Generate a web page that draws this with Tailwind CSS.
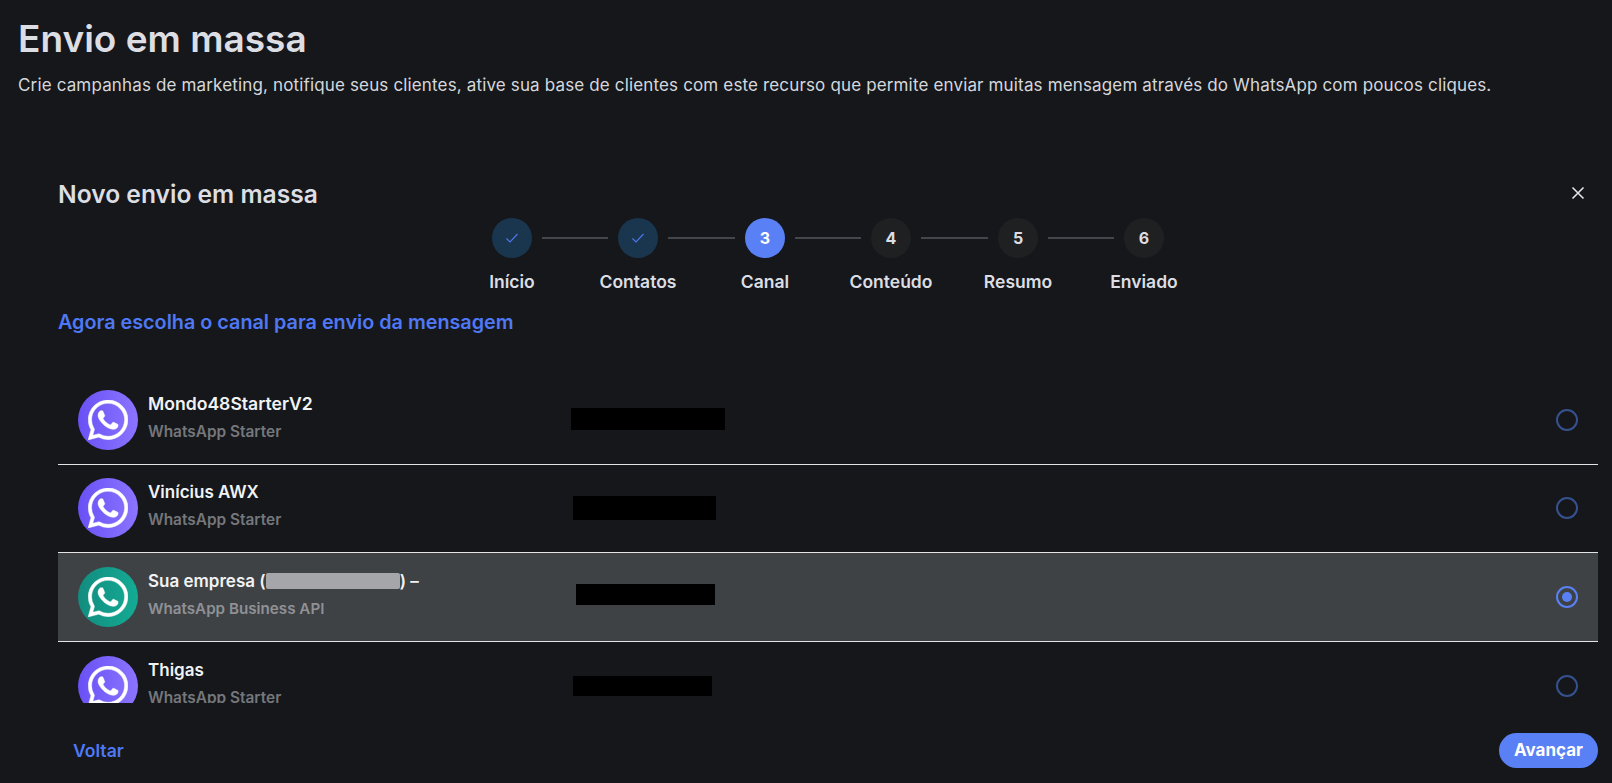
<!DOCTYPE html>
<html lang="pt-BR">
<head>
    <meta charset="UTF-8">
    <title>Envio em massa</title>
    <script src="https://cdn.jsdelivr.net/npm/@tailwindcss/browser@4"></script>
</head>
<body class="bg-[#15171b] h-[783px] overflow-hidden font-['Inter','Liberation_Sans',sans-serif] text-[#dcdee3]">
    <svg class="hidden">
        <symbol id="wa" viewBox="0 0 24 24">
            <path fill="currentColor" stroke="currentColor" stroke-width="0.25" d="M17.472 14.382c-.297-.149-1.758-.867-2.03-.967-.273-.099-.471-.148-.67.15-.197.297-.767.966-.94 1.164-.173.199-.347.223-.644.075-.297-.15-1.255-.463-2.39-1.475-.883-.788-1.48-1.761-1.653-2.059-.173-.297-.018-.458.13-.606.134-.133.298-.347.446-.52.149-.174.198-.298.298-.497.099-.198.05-.371-.025-.52-.075-.149-.669-1.612-.916-2.207-.242-.579-.487-.5-.669-.51-.173-.008-.371-.01-.57-.01-.198 0-.52.074-.792.372-.272.297-1.04 1.016-1.04 2.479 0 1.462 1.065 2.875 1.213 3.074.149.198 2.096 3.2 5.077 4.487.709.306 1.262.489 1.694.625.712.227 1.36.195 1.871.118.571-.085 1.758-.719 2.006-1.413.248-.694.248-1.289.173-1.413-.074-.124-.272-.198-.57-.347m-5.421 7.403h-.004a9.87 9.87 0 01-5.031-1.378l-.361-.214-3.741.982.998-3.648-.235-.374a9.86 9.86 0 01-1.51-5.26c.001-5.45 4.436-9.884 9.888-9.884 2.64 0 5.122 1.03 6.988 2.898a9.825 9.825 0 012.893 6.994c-.003 5.45-4.437 9.884-9.885 9.884m8.413-18.297A11.815 11.815 0 0012.05 0C5.495 0 .16 5.335.157 11.892c0 2.096.547 4.142 1.588 5.945L.057 24l6.305-1.654a11.882 11.882 0 005.683 1.448h.005c6.554 0 11.89-5.335 11.893-11.893a11.821 11.821 0 00-3.48-8.413z"/>
        </symbol>
    </svg>

    <header class="pl-[18px] pt-[17px]">
        <h1 class="text-[37px] leading-[44px] font-semibold">Envio em massa</h1>
        <p class="mt-[12px] text-[17px] tracking-[0.15px] leading-[24px] text-[#d5d7dc]">Crie campanhas de marketing, notifique seus clientes, ative sua base de clientes com este recurso que permite enviar muitas mensagem através do WhatsApp com poucos cliques.</p>
    </header>

    <main class="pl-[58px] pr-[14px] pt-[81px]">
        <div class="flex items-center justify-between h-[32px]">
            <h2 class="text-[24.6px] leading-[32px] font-semibold">Novo envio em massa</h2>
            <svg class="w-[14px] h-[14px] mr-[13px] mb-[2px]" viewBox="0 0 14 14" fill="none" stroke="#e1e3e8" stroke-width="1.6"><path d="M1.5 1.5l11 11M12.5 1.5l-11 11"/></svg>
        </div>

        <div class="flex justify-center items-start mt-[8px]">
            <div class="w-[100px] flex flex-col items-center gap-[12px]">
                <div class="w-[40px] h-[40px] rounded-full bg-[#1a364e] flex items-center justify-center">
                    <svg class="w-[16px] h-[16px]" viewBox="0 0 16 16" fill="none" stroke="#4f78ee" stroke-width="1.1"><path d="M2.5 8.5l3.5 3.5 7.5-8"/></svg>
                </div>
                <span class="text-[17.5px] leading-[24px] font-semibold">Início</span>
            </div>
            <div class="w-[66px] h-[2px] bg-[#44464b] mt-[19px] mx-[-20px]"></div>
            <div class="w-[100px] flex flex-col items-center gap-[12px]">
                <div class="w-[40px] h-[40px] rounded-full bg-[#1a364e] flex items-center justify-center">
                    <svg class="w-[16px] h-[16px]" viewBox="0 0 16 16" fill="none" stroke="#4f78ee" stroke-width="1.1"><path d="M2.5 8.5l3.5 3.5 7.5-8"/></svg>
                </div>
                <span class="text-[17.5px] leading-[24px] font-semibold">Contatos</span>
            </div>
            <div class="w-[67px] h-[2px] bg-[#44464b] mt-[19px] mx-[-20px]"></div>
            <div class="w-[100px] flex flex-col items-center gap-[12px]">
                <div class="w-[40px] h-[40px] rounded-full bg-[#5a80f5] flex items-center justify-center font-bold text-white">3</div>
                <span class="text-[17.5px] leading-[24px] font-semibold">Canal</span>
            </div>
            <div class="w-[66px] h-[2px] bg-[#44464b] mt-[19px] mx-[-20px]"></div>
            <div class="w-[100px] flex flex-col items-center gap-[12px]">
                <div class="w-[40px] h-[40px] rounded-full bg-[#1f2022] flex items-center justify-center font-bold">4</div>
                <span class="text-[17.5px] leading-[24px] font-semibold">Conteúdo</span>
            </div>
            <div class="w-[67px] h-[2px] bg-[#44464b] mt-[19px] mx-[-20px]"></div>
            <div class="w-[100px] flex flex-col items-center gap-[12px]">
                <div class="w-[40px] h-[40px] rounded-full bg-[#1f2022] flex items-center justify-center font-bold">5</div>
                <span class="text-[17.5px] leading-[24px] font-semibold">Resumo</span>
            </div>
            <div class="w-[66px] h-[2px] bg-[#44464b] mt-[19px] mx-[-20px]"></div>
            <div class="w-[100px] flex flex-col items-center gap-[12px]">
                <div class="w-[40px] h-[40px] rounded-full bg-[#1f2022] flex items-center justify-center font-bold">6</div>
                <span class="text-[17.5px] leading-[24px] font-semibold">Enviado</span>
            </div>
        </div>

        <h3 class="mt-[14px] text-[19.8px] leading-[28px] font-semibold text-[#4f78f5]">Agora escolha o canal para envio da mensagem</h3>

        <div class="mt-[40px] h-[327px] overflow-hidden">
            <div class="h-[88.5px] border-b border-[#e4e4e4] flex items-center pl-[20px] pr-[20px]">
                <div class="w-[60px] h-[60px] shrink-0 rounded-full bg-linear-to-r from-[#6950f5] to-[#8c74ff] text-white flex items-center justify-center">
                    <svg class="w-[40px] h-[40px]"><use href="#wa"/></svg>
                </div>
                <div class="ml-[10px] w-[423px] shrink-0 pb-[6px]">
                    <div class="text-[17.6px] leading-[24px] font-semibold text-[#f1f2f4]">Mondo48StarterV2</div>
                    <div class="mt-[6px] text-[15.4px] leading-[20px] font-semibold text-[#75777b]">WhatsApp Starter</div>
                </div>
                <div class="w-[154px] h-[22px] bg-black mb-[2px]"></div>
                <div class="ml-auto w-[22px] h-[22px] rounded-full border-2 border-[#36518f]"></div>
            </div>
            <div class="h-[88.5px] border-b border-[#e4e4e4] flex items-center pl-[20px] pr-[20px]">
                <div class="w-[60px] h-[60px] shrink-0 rounded-full bg-linear-to-r from-[#6950f5] to-[#8c74ff] text-white flex items-center justify-center">
                    <svg class="w-[40px] h-[40px]"><use href="#wa"/></svg>
                </div>
                <div class="ml-[10px] w-[425px] shrink-0 pb-[6px]">
                    <div class="text-[17px] leading-[24px] font-semibold text-[#f1f2f4]">Vinícius AWX</div>
                    <div class="mt-[6px] text-[15.4px] leading-[20px] font-semibold text-[#75777b]">WhatsApp Starter</div>
                </div>
                <div class="w-[143px] h-[24px] bg-black"></div>
                <div class="ml-auto w-[22px] h-[22px] rounded-full border-2 border-[#36518f]"></div>
            </div>
            <div class="h-[88.5px] border-b border-[#e4e4e4] bg-[#3e4245] flex items-center pl-[20px] pr-[20px]">
                <div class="w-[60px] h-[60px] shrink-0 rounded-full bg-linear-to-r from-[#128c7e] to-[#14ab94] text-white flex items-center justify-center">
                    <svg class="w-[40px] h-[40px]"><use href="#wa"/></svg>
                </div>
                <div class="ml-[10px] w-[428px] shrink-0 pb-[6px]">
                    <div class="text-[17px] leading-[24px] font-semibold text-[#f1f2f4] flex items-center">Sua empresa (<span class="w-[134px] h-[16px] rounded-[2px] bg-[#a5a6a9]"></span>) –</div>
                    <div class="mt-[6px] text-[15.2px] leading-[20px] font-semibold text-[#8f9195]">WhatsApp Business API</div>
                </div>
                <div class="w-[139px] h-[21px] bg-black mb-[4px]"></div>
                <div class="ml-auto w-[22px] h-[22px] rounded-full border-2 border-[#5a80f5] flex items-center justify-center">
                    <div class="w-[10px] h-[10px] rounded-full bg-[#5a80f5]"></div>
                </div>
            </div>
            <div class="h-[88.5px] flex items-center pl-[20px] pr-[20px]">
                <div class="w-[60px] h-[60px] shrink-0 rounded-full bg-linear-to-r from-[#6950f5] to-[#8c74ff] text-white flex items-center justify-center">
                    <svg class="w-[40px] h-[40px]"><use href="#wa"/></svg>
                </div>
                <div class="ml-[10px] w-[425px] shrink-0 pb-[6px]">
                    <div class="text-[17px] leading-[24px] font-semibold text-[#f1f2f4]">Thigas</div>
                    <div class="mt-[6px] text-[15.4px] leading-[20px] font-semibold text-[#75777b]">WhatsApp Starter</div>
                </div>
                <div class="w-[139px] h-[20px] bg-black"></div>
                <div class="ml-auto w-[22px] h-[22px] rounded-full border-2 border-[#36518f]"></div>
            </div>
        </div>
    </main>

    <footer class="flex items-center justify-between pl-[73px] pr-[14px] mt-[30px]">
        <span class="text-[17.6px] font-semibold text-[#4f78f5] mt-[2px]">Voltar</span>
        <button class="h-[35px] w-[99px] rounded-full bg-[#5a80f5] text-white text-[17px] font-bold">Avançar</button>
    </footer>
</body>
</html>
